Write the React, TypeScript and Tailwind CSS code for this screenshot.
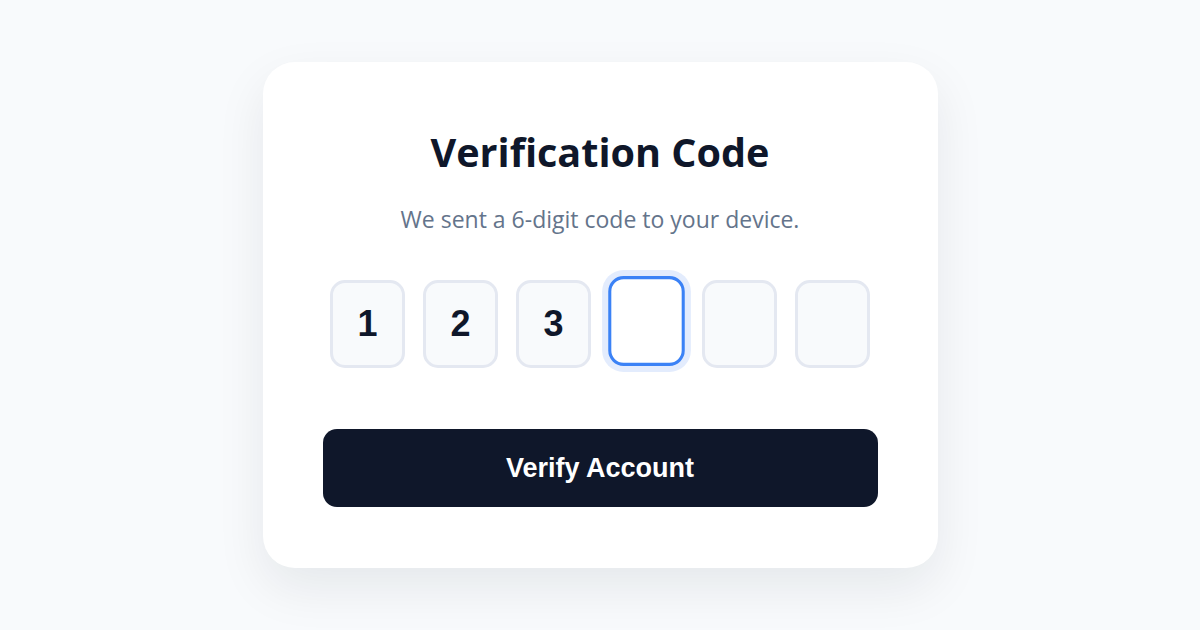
import React from "react";

export default function App() {
  const digits = ["1", "2", "3", "", "", ""];
  return (
    <div className="w-[1200px] h-[630px] bg-[#f8fafc] flex items-center justify-center">
      <div className="w-[675px] h-[506px] bg-white rounded-[32px] shadow-[0_20px_50px_rgba(15,23,42,0.08)] px-[60px] pt-[60px] flex flex-col items-center">
        <h1
          className="text-[39.6px] leading-[60px] font-bold text-[#0f172a]"
          style={{ fontFamily: '"Open Sans", "Noto Sans", sans-serif' }}
        >
          Verification Code
        </h1>
        <p
          className="mt-[22px] text-[23px] leading-[30px] text-[#64748b]"
          style={{ fontFamily: '"Open Sans", "Noto Sans", sans-serif' }}
        >
          We sent a 6-digit code to your device.
        </p>
        <div className="mt-[46px] flex gap-[18px]">
          {digits.map((d, i) => {
            const focused = i === 3;
            return (
              <div
                key={i}
                className={
                  focused
                    ? "w-[75px] h-[88px] rounded-[15px] border-[3px] border-[#3b82f6] bg-white ring-[6px] ring-[#e3ecfd] -translate-y-[3px] scale-[1.02] flex items-center justify-center"
                    : "w-[75px] h-[88px] rounded-[15px] border-[3px] border-[#e4e8f1] bg-[#f8fafc] flex items-center justify-center"
                }
              >
                <span
                  className="text-[36px] font-bold text-[#0f172a]"
                  style={{ fontFamily: '"Liberation Sans", Arial, sans-serif' }}
                >
                  {d}
                </span>
              </div>
            );
          })}
        </div>
        <button
          className="mt-[61px] w-full h-[78px] rounded-[14px] bg-[#0f172a] text-white text-[27px] font-bold"
          style={{ fontFamily: '"Liberation Sans", Arial, sans-serif' }}
        >
          Verify Account
        </button>
      </div>
    </div>
  );
}
